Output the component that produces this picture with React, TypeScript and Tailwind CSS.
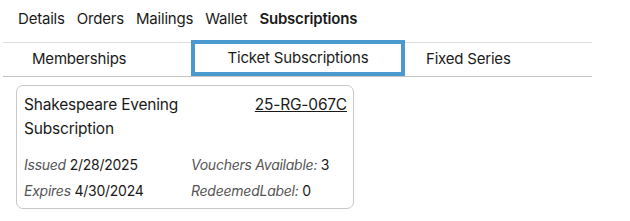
export default function App() {
  const navItems = ["Details", "Orders", "Mailings", "Wallet"];

  return (
    <div className="min-h-screen w-[630px] bg-white text-[#1a1a1a] font-['Inter',sans-serif]">
      {/* top nav */}
      <div className="flex items-center h-[38px] pl-[18px] gap-[12px] text-[15px] tracking-[-0.2px]">
        {navItems.map((n) => (
          <span key={n}>{n}</span>
        ))}
        <span className="font-semibold">Subscriptions</span>
      </div>

      {/* sub tabs */}
      <div className="mt-[4px] ml-[3px] w-[589px] h-[35px] border-t border-[#dedede] border-b border-b-[#c4c4c4] flex text-[15px] tracking-[-0.2px]">
        <div className="w-[188px] pl-[29px] flex items-center">Memberships</div>
        <div className="w-[214px] -mt-[3px] h-[36px] border-4 border-[#4a9ad0] flex items-center justify-center">
          Ticket Subscriptions
        </div>
        <div className="pl-[21px] flex items-center">Fixed Series</div>
      </div>

      {/* card */}
      <div className="ml-[16px] mt-[8px] w-[338px] h-[124px] border border-[#c8c8c8] rounded-[7px] pl-[7px] pr-[6px] pt-[7px]">
        <div className="flex justify-between items-start text-[15.5px] leading-[24px] tracking-[-0.2px]">
          <div className="w-[180px]">Shakespeare Evening Subscription</div>
          <a className="underline">25-RG-067C</a>
        </div>
        <div className="mt-[14px] grid grid-cols-[167px_1fr] gap-y-[6px] text-[14px] leading-[20px] tracking-[-0.25px]">
          <div>
            <span className="italic text-[#555]">Issued</span> 2/28/2025
          </div>
          <div>
            <span className="italic text-[#555]">Vouchers Available:</span> 3
          </div>
          <div>
            <span className="italic text-[#555]">Expires</span> 4/30/2024
          </div>
          <div>
            <span className="italic text-[#555]">RedeemedLabel:</span> 0
          </div>
        </div>
      </div>
    </div>
  );
}
